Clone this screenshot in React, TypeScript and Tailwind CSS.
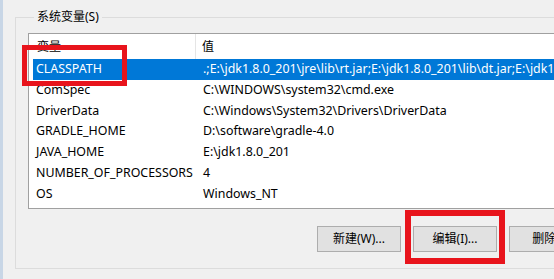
const rows: [string, string][] = [
  ["CLASSPATH", ".;E:\\jdk1.8.0_201\\jre\\lib\\rt.jar;E:\\jdk1.8.0_201\\lib\\dt.jar;E:\\jdk1.8.0_201\\lib\\tools.jar"],
  ["ComSpec", "C:\\WINDOWS\\system32\\cmd.exe"],
  ["DriverData", "C:\\Windows\\System32\\Drivers\\DriverData"],
  ["GRADLE_HOME", "D:\\software\\gradle-4.0"],
  ["JAVA_HOME", "E:\\jdk1.8.0_201"],
  ["NUMBER_OF_PROCESSORS", "4"],
  ["OS", "Windows_NT"],
];

function Button({ label }: { label: string }) {
  return (
    <button className="w-[84px] h-[26px] shrink-0 border border-[#adadad] bg-[#e1e1e1] text-[12px] text-black whitespace-nowrap">
      {label}
    </button>
  );
}

export default function App() {
  return (
    <div
      className="relative w-[554px] h-[279px] overflow-hidden bg-[#f0f0f0] flex"
      style={{ fontFamily: '"Noto Sans", "Noto Sans CJK SC", sans-serif' }}
    >
      {/* window edge */}
      <div className="w-[3px] shrink-0 bg-[#c8d6e6]" />
      <div className="w-[12px] shrink-0" />

      {/* group box */}
      <fieldset className="mt-[10px] h-[259px] w-[560px] shrink-0 border border-[#dcdcdc] px-[12px] pt-[2px] pb-0 min-w-0">
        <legend className="ml-[6px] px-[3px] text-[12px] leading-[14px] text-black">系统变量(S)</legend>

        {/* list view */}
        <div className="mt-[7px] h-[176px] border border-[#a0a0a0] bg-white overflow-hidden text-[12.4px] text-black">
          <div className="flex h-[25px] items-center">
            <div className="w-[167px] h-full flex items-center pl-[8px] border-r border-[#e5e5e5] text-[12px]">变量</div>
            <div className="pl-[6px] text-[12px]">值</div>
          </div>
          {rows.map(([name, value], i) => (
            <div
              key={name}
              className={`ml-[4px] flex h-[20.8px] items-center whitespace-nowrap ${
                i === 0 ? "bg-[#0078d7] text-white" : ""
              }`}
            >
              <div className="w-[164px] shrink-0 pl-[3px]">{name}</div>
              <div className="pl-[6px]">{value}</div>
            </div>
          ))}
        </div>

        {/* buttons */}
        <div className="mt-[17px] flex gap-[12px] pl-[289px]">
          <Button label="新建(W)..." />
          <Button label="编辑(I)..." />
          <Button label="删除(L)" />
        </div>
      </fieldset>

      {/* red annotation boxes */}
      <div className="absolute left-[22px] top-[45px] w-[105px] h-[41px] border-[5px] border-[#e8141c]" />
      <div className="absolute left-[405px] top-[210px] w-[100px] h-[54px] border-[6px] border-[#e8141c]" />
    </div>
  );
}
